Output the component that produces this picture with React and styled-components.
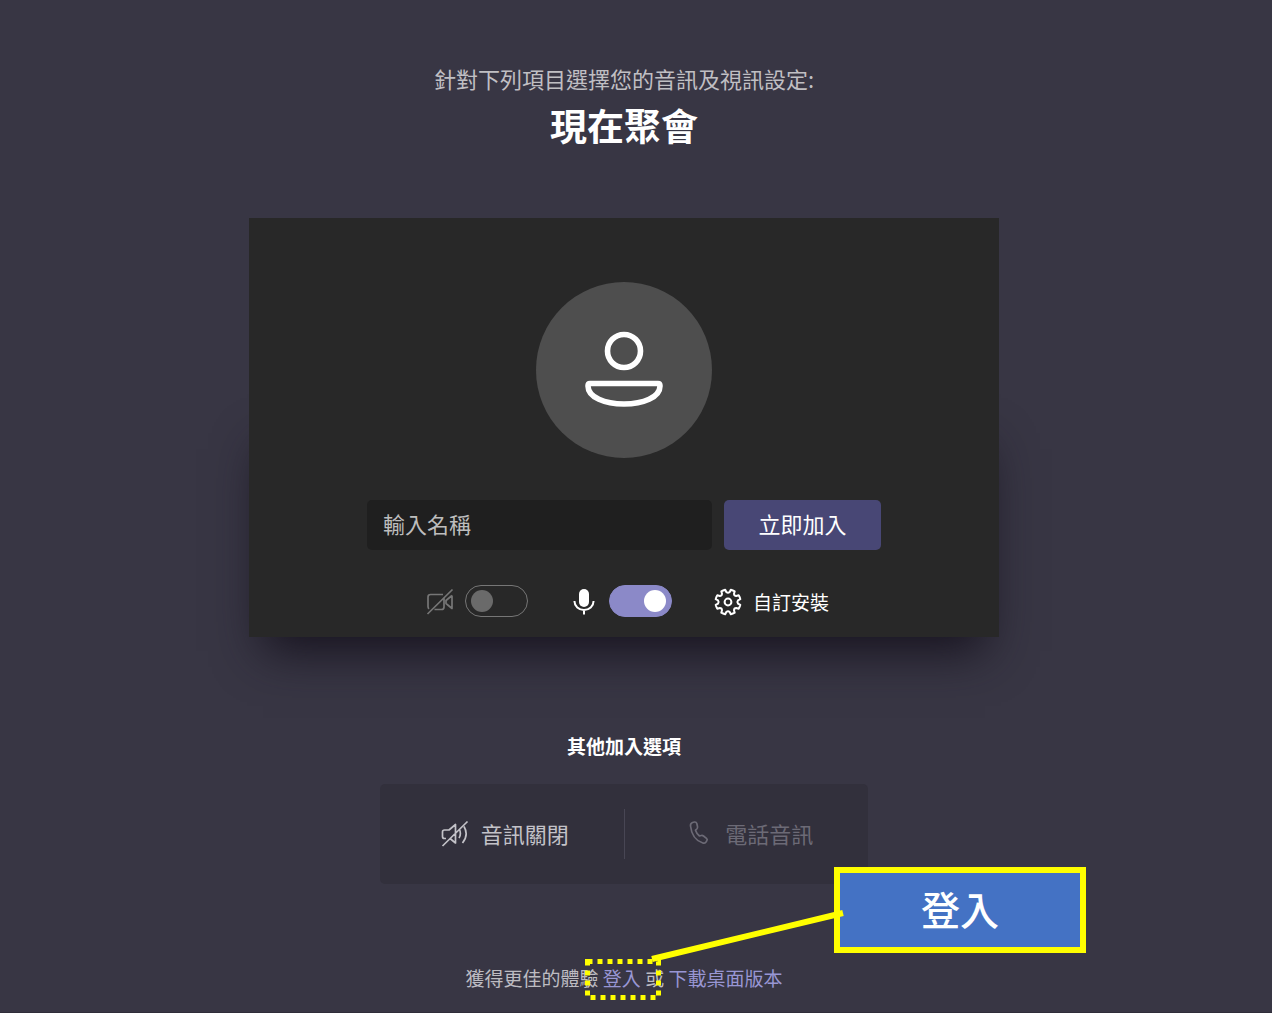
import React, { useState } from 'react';
import styled, { createGlobalStyle } from 'styled-components';

const GlobalStyle = createGlobalStyle`
  * { box-sizing: border-box; }
  body {
    margin: 0;
    background: #383644;
    color: #fff;
    font-family: "Noto Sans CJK TC", "Liberation Sans", sans-serif;
  }
  button, input { font-family: inherit; }
`;

const Page = styled.main`
  position: relative;
  z-index: 0;
  min-height: 100vh;
  padding: 63px 24px 0 0;
  display: flex;
  flex-direction: column;
  align-items: center;
  border-bottom: 1px solid #2f2d39;
`;

const Lead = styled.p`
  margin: 0;
  font-size: 22px;
  line-height: 30px;
  color: #c0bfc3;
`;

const Title = styled.h1`
  margin: 8px 0 69px;
  font-size: 37px;
  line-height: 48px;
  font-weight: 700;
`;

const Preview = styled.section`
  position: relative;
  width: 100%;
  max-width: 750px;
  padding: 64px 0 20px;
  display: flex;
  flex-direction: column;
  align-items: center;
  background: #282828;
  &::before {
    content: "";
    position: absolute;
    z-index: -1;
    inset: 45% 0 0;
    box-shadow: 0 28px 45px -14px #17131f;
  }
`;

const Avatar = styled.div`
  width: 176px;
  height: 176px;
  border-radius: 50%;
  background: #4e4e4e;
`;

const JoinForm = styled.form`
  width: 514px;
  margin-top: 42px;
  display: flex;
  gap: 12px;
`;

const NameInput = styled.input`
  flex: 1;
  min-width: 0;
  height: 50px;
  padding: 0 16px 4px;
  border: 0;
  border-radius: 5px;
  background: #1f1f1f;
  color: #fff;
  font-size: 22px;
  &::placeholder { color: #bdbdbd; opacity: 1; }
`;

const JoinButton = styled.button`
  width: 157px;
  height: 50px;
  padding: 0 0 4px;
  border: 0;
  border-radius: 5px;
  background: #484775;
  color: #fff;
  font-size: 22px;
`;

const Controls = styled.div`
  width: 514px;
  margin-top: 35px;
  padding: 0 52px 0 58px;
  display: flex;
  align-items: center;
  justify-content: space-between;
`;

const ToggleLabel = styled.label`
  display: flex;
  align-items: center;
  gap: 10px;
`;

const Icon = styled.svg`
  width: 30px;
  height: 30px;
  flex: none;
  display: block;
  fill: none;
  stroke: currentColor;
  stroke-width: ${p => p.$weight || 1.7};
  stroke-linejoin: round;
  color: ${p => p.$color || 'inherit'};
`;

const Switch = styled.input`
  appearance: none;
  width: 63px;
  height: 32px;
  margin: 0;
  padding: 0 5px;
  display: flex;
  align-items: center;
  border: 1px solid #767676;
  border-radius: 16px;
  &::before {
    content: "";
    width: 22px;
    height: 22px;
    border-radius: 50%;
    background: #6a6a6a;
  }
  &:checked {
    justify-content: flex-end;
    border-color: #8b89c8;
    background: #8b89c8;
  }
  &:checked::before { background: #fff; }
`;

const SettingsButton = styled.button`
  padding: 2px 0 0;
  border: 0;
  background: none;
  color: #fff;
  display: flex;
  align-items: center;
  gap: 10px;
  font-size: 19px;
  line-height: 28px;
`;

const OptionsTitle = styled.h2`
  margin: 95px 0 24px;
  font-size: 19px;
  line-height: 28px;
  font-weight: 700;
`;

const Options = styled.div`
  width: 488px;
  padding: 25px 0;
  display: flex;
  border-radius: 5px;
  background: #32303c;
`;

const OptionButton = styled.button`
  flex: 1;
  height: 50px;
  padding: 0 0 2px 5px;
  border: 0;
  background: none;
  color: ${p => (p.$muted ? '#6c6a76' : '#c3c2c8')};
  display: flex;
  align-items: center;
  justify-content: center;
  gap: 11px;
  font-size: 22px;
  & + & { border-left: 1px solid #484654; }
`;

const Footer = styled.p`
  position: relative;
  margin: 80px 0 0;
  font-size: 19px;
  line-height: 28px;
  white-space: nowrap;
  color: #bdbcc2;
`;

const TextLink = styled.a`
  color: #9896d4;
  text-decoration: none;
`;

const Pointer = styled.svg`
  position: absolute;
  left: 50%;
  bottom: -8px;
  width: 260px;
  height: 100px;
  margin-left: -40px;
  pointer-events: none;
  fill: none;
  stroke: #ffff00;
`;

const Callout = styled.span`
  position: absolute;
  left: 50%;
  bottom: 39px;
  margin-left: 210px;
  width: 252px;
  height: 86px;
  padding-bottom: 5px;
  display: flex;
  align-items: center;
  justify-content: center;
  border: 6px solid #ffff00;
  background: #4472c4;
  color: #fff;
  font-size: 39px;
  font-weight: 500;
`;

function CameraOffIcon() {
  return (
    <Icon viewBox="0 0 30 30" $color="#767676" aria-hidden="true">
      <path d="M18 8.500H5.500Q3 8.500 3 11V20.500Q3 22 4 22.800M9.500 23.500H16.500Q19 23.500 19 21V12M27 9.500V22.500L21 17.500V14.500L27 9.500M2.500 28L27.500 3.500" />
    </Icon>
  );
}

function MicIcon() {
  return (
    <Icon viewBox="0 0 30 30" $weight={2} aria-hidden="true">
      <rect x="10" y="3" width="10" height="18" rx="5" fill="currentColor" stroke="none" />
      <path d="M5.500 15V15.500A9.500 8.500 0 0 0 24.500 15.500V15M15 24V28.500" />
    </Icon>
  );
}

function GearIcon() {
  return (
    <Icon viewBox="0 0 30 30" $weight={2} aria-hidden="true">
      <circle cx="15" cy="15" r="3.400" />
      <path d="M12.2 2.700L13.300 5Q15 6.400 16.700 5L17.800 2.700Q20 3.300 21.700 4.300L21 6.800Q21.100 9 23.200 9L25.700 8.300Q26.900 10.200 27.300 12.200L25 13.400Q23.800 15 25 16.600L27.300 17.800Q26.800 20 25.700 21.700L23.200 21Q21.100 21 21 23.200L21.700 25.700Q20 26.700 17.800 27.300L16.700 25Q15 23.600 13.300 25L12.200 27.300Q10 26.700 8.300 25.700L9 23.200Q8.900 21 6.800 21L4.300 21.700Q3.200 20 2.700 17.800L5 16.600Q6.200 15 5 13.400L2.700 12.200Q3.200 10 4.300 8.300L6.800 9Q8.900 9 9 6.800L8.300 4.300Q10 3.300 12.200 2.700Z" />
    </Icon>
  );
}

function SpeakerOffIcon() {
  return (
    <Icon viewBox="0 0 30 30" aria-hidden="true">
      <path d="M6 20.500H4.500Q2.500 20.500 2.500 18.500V14Q2.500 12 4.500 12H9L15.500 6.500V25L10 20.500M19.500 11.500Q21.500 16 19 20M24 8.500Q29 17 22.500 25M2.500 28L27.500 3.500" />
    </Icon>
  );
}

function PhoneIcon() {
  return (
    <Icon viewBox="0 0 30 30" aria-hidden="true">
      <path d="M8.500 4.500L10.500 4Q12.300 3.800 12.800 5.500L13.500 8.500Q13.800 10 12.800 11L11.500 12.200Q12.500 15.500 15.500 18L17.300 17.500Q18.500 17.200 19.500 18L22.500 20.300Q23.800 21.500 22.800 22.800L21.800 24.200Q20.800 25.500 18.800 25Q8 21.500 6.500 8Q6.300 5.300 8.500 4.500Z" />
    </Icon>
  );
}

export default function App() {
  const [camera, setCamera] = useState(false);
  const [mic, setMic] = useState(true);
  return (
    <>
      <GlobalStyle />
      <Page>
        <Lead>針對下列項目選擇您的音訊及視訊設定:</Lead>
        <Title>現在聚會</Title>
        <Preview>
          <Avatar>
            <svg width="176" height="176" viewBox="0 0 176 176" fill="none" stroke="#fff" strokeWidth="5.600" strokeLinejoin="round" aria-hidden="true">
              <circle cx="88" cy="69" r="16.500" />
              <path d="M54 101.500H122Q124 101.500 124 104C124 115.500 107 122 88 122C69 122 52 115.500 52 104Q52 101.500 54 101.500Z" />
            </svg>
          </Avatar>
          <JoinForm onSubmit={e => e.preventDefault()}>
            <NameInput aria-label="輸入名稱" placeholder="輸入名稱" />
            <JoinButton type="submit">立即加入</JoinButton>
          </JoinForm>
          <Controls>
            <ToggleLabel>
              <CameraOffIcon />
              <Switch type="checkbox" aria-label="攝影機" checked={camera} onChange={e => setCamera(e.target.checked)} />
            </ToggleLabel>
            <ToggleLabel>
              <MicIcon />
              <Switch type="checkbox" aria-label="麥克風" checked={mic} onChange={e => setMic(e.target.checked)} />
            </ToggleLabel>
            <SettingsButton type="button">
              <GearIcon />
              自訂安裝
            </SettingsButton>
          </Controls>
        </Preview>
        <OptionsTitle>其他加入選項</OptionsTitle>
        <Options>
          <OptionButton type="button"><SpeakerOffIcon />音訊關閉</OptionButton>
          <OptionButton type="button" $muted><PhoneIcon />電話音訊</OptionButton>
        </Options>
        <Footer>
          獲得更佳的體驗 <TextLink href="#signin">登入</TextLink> 或 <TextLink href="#download">下載桌面版本</TextLink>
          <Callout>登入</Callout>
          <Pointer viewBox="0 0 260 100" aria-hidden="true">
            <rect x="3.500" y="61.500" width="71" height="36" strokeWidth="5" strokeDasharray="5 5" />
            <path d="M68 59L259 13" strokeWidth="6" />
          </Pointer>
        </Footer>
      </Page>
    </>
  );
}
